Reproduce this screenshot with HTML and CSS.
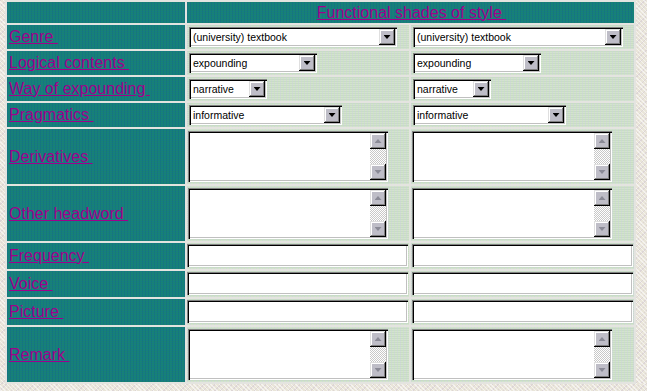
FILE: index.html
```html
<!DOCTYPE html>
<html lang="en">
<head>
  <meta charset="UTF-8" />
  <title>Functional shades of style</title>
  <link rel="stylesheet" href="styles.css">
</head>
<body>
  <table class="grid">
    <colgroup>
      <col class="c-lab"><col class="c-one"><col class="c-two">
    </colgroup>
    <tr>
      <td class="lab head"></td>
      <td class="lab head title" colspan="2"><a href="#">Functional shades of style&nbsp;</a></td>
    </tr>
    <tr>
      <td class="lab"><a href="#">Genre&nbsp;</a></td>
      <td class="val"><div class="drop w-genre"><select><option>(university) textbook</option></select><span class="arrow"></span></div></td>
      <td class="val"><div class="drop w-genre2"><select><option>(university) textbook</option></select><span class="arrow"></span></div></td>
    </tr>
    <tr>
      <td class="lab"><a href="#">Logical contents&nbsp;</a></td>
      <td class="val"><div class="drop w-logic"><select><option>expounding</option></select><span class="arrow"></span></div></td>
      <td class="val"><div class="drop w-logic"><select><option>expounding</option></select><span class="arrow"></span></div></td>
    </tr>
    <tr>
      <td class="lab"><a href="#">Way of expounding&nbsp;</a></td>
      <td class="val"><div class="drop w-way"><select><option>narrative</option></select><span class="arrow"></span></div></td>
      <td class="val"><div class="drop w-way"><select><option>narrative</option></select><span class="arrow"></span></div></td>
    </tr>
    <tr>
      <td class="lab"><a href="#">Pragmatics&nbsp;</a></td>
      <td class="val"><div class="drop w-prag"><select><option>informative</option></select><span class="arrow"></span></div></td>
      <td class="val"><div class="drop w-prag"><select><option>informative</option></select><span class="arrow"></span></div></td>
    </tr>
    <tr>
      <td class="lab"><a href="#">Derivatives&nbsp;</a></td>
      <td class="val"><div class="memo"><textarea></textarea><div class="sb"><span class="sb-btn up"></span><span class="sb-track"></span><span class="sb-btn down"></span></div></div></td>
      <td class="val"><div class="memo"><textarea></textarea><div class="sb"><span class="sb-btn up"></span><span class="sb-track"></span><span class="sb-btn down"></span></div></div></td>
    </tr>
    <tr>
      <td class="lab"><a href="#">Other headword&nbsp;</a></td>
      <td class="val"><div class="memo"><textarea></textarea><div class="sb"><span class="sb-btn up"></span><span class="sb-track"></span><span class="sb-btn down"></span></div></div></td>
      <td class="val"><div class="memo"><textarea></textarea><div class="sb"><span class="sb-btn up"></span><span class="sb-track"></span><span class="sb-btn down"></span></div></div></td>
    </tr>
    <tr>
      <td class="lab"><a href="#">Frequency&nbsp;</a></td>
      <td class="val"><input type="text" class="field"></td>
      <td class="val"><input type="text" class="field"></td>
    </tr>
    <tr>
      <td class="lab"><a href="#">Voice&nbsp;</a></td>
      <td class="val"><input type="text" class="field"></td>
      <td class="val"><input type="text" class="field"></td>
    </tr>
    <tr>
      <td class="lab"><a href="#">Picture&nbsp;</a></td>
      <td class="val"><input type="text" class="field"></td>
      <td class="val"><input type="text" class="field"></td>
    </tr>
    <tr>
      <td class="lab"><a href="#">Remark&nbsp;</a></td>
      <td class="val"><div class="memo"><textarea></textarea><div class="sb"><span class="sb-btn up"></span><span class="sb-track"></span><span class="sb-btn down"></span></div></div></td>
      <td class="val"><div class="memo"><textarea></textarea><div class="sb"><span class="sb-btn up"></span><span class="sb-track"></span><span class="sb-btn down"></span></div></div></td>
    </tr>
  </table>
</body>
</html>
```

FILE: styles.css
```css
* { box-sizing: border-box; }
body {
  margin: 0 0 0 5px;
  background-color: #e9e5d9;
  background-image:
    repeating-linear-gradient(45deg, rgba(255,255,255,0.55) 0 1px, transparent 1px 3px),
    repeating-linear-gradient(-45deg, rgba(190,175,205,0.3) 0 1px, transparent 1px 4px);
  font-family: "Liberation Sans", Arial, sans-serif;
  overflow: hidden;
}

.grid {
  table-layout: fixed;
  width: 631px;
  border-collapse: separate;
  border-spacing: 2px;
  background: #e4e4e0;
}
.c-lab { width: 178px; }
.c-one { width: 222px; }
.c-two { width: 223px; }
.grid td { padding: 0; border: none; }

.lab {
  background-color: #157f7e;
  background-image:
    repeating-linear-gradient(90deg, rgba(20,70,160,0.18) 0 1px, transparent 1px 3px),
    repeating-linear-gradient(0deg, rgba(40,140,70,0.18) 0 1px, transparent 1px 2px);
  padding-left: 2px !important;
  vertical-align: middle;
  font-size: 16px;
}
.lab a { color: #a0008c; text-decoration: underline; }
.head { height: 21px; }
.title { text-align: center; }

.val {
  background-color: #c8ddc4;
  background-image:
    repeating-linear-gradient(90deg, rgba(205,200,235,0.3) 0 1px, transparent 1px 3px),
    repeating-linear-gradient(0deg, rgba(255,255,240,0.2) 0 1px, transparent 1px 2px);
  vertical-align: middle;
}

/* sunken win95 box */
.drop, .memo, .field {
  background: #fff;
  box-shadow:
    inset 1px 1px 0 #808080,
    inset 2px 2px 0 #000,
    inset -1px -1px 0 #fff,
    inset -2px -2px 0 #c0c0c0;
}

.drop {
  display: flex;
  height: 20px;
  padding: 2px;
  margin: 2px 0 2px 2px;
}
.w-genre { width: 208px; }
.w-genre2 { width: 210px; }
.w-logic { width: 128px; }
.w-way { width: 78px; }
.w-prag { width: 153px; }
.drop select {
  appearance: none;
  -webkit-appearance: none;
  flex: 1;
  min-width: 0;
  height: 16px;
  border: none;
  background: transparent;
  padding: 0 2px;
  font-family: "Liberation Sans", Arial, sans-serif;
  font-size: 10.5px;
  color: #000;
  outline: none;
}

.arrow, .sb-btn {
  width: 16px;
  height: 16px;
  flex: none;
  background: #bebdc7;
  box-shadow:
    inset -1px -1px 0 #000,
    inset 1px 1px 0 #dfdfdf,
    inset -2px -2px 0 #808080,
    inset 2px 2px 0 #fff;
  display: flex;
  align-items: center;
  justify-content: center;
}
.arrow::after, .sb-btn::after {
  content: "";
  width: 7px;
  height: 4px;
  background: #000;
  clip-path: polygon(0 0, 100% 0, 50% 100%);
}
.sb-btn::after { background: #8a8a96; }
.sb-btn.up::after { clip-path: polygon(50% 0, 100% 100%, 0 100%); }

.memo {
  display: flex;
  width: 200px;
  height: 51px;
  padding: 2px;
  margin: 2px 0 2px 1px;
}
.memo textarea {
  flex: 1;
  min-width: 0;
  border: none;
  resize: none;
  overflow: hidden;
  outline: none;
  background: transparent;
  font-family: "Liberation Sans", Arial, sans-serif;
  font-size: 10.5px;
  padding: 1px 2px;
}
.sb {
  width: 16px;
  display: flex;
  flex-direction: column;
}
.sb-track {
  flex: 1;
  background: repeating-conic-gradient(#c8c8c8 0 25%, #fff 0 50%) 0 0 / 2px 2px;
}

.field {
  display: block;
  width: calc(100% - 1px);
  height: 23px;
  margin: 1px 0 2px 0;
  border: none;
  outline: none;
  padding: 2px 3px;
  font-family: "Liberation Sans", Arial, sans-serif;
  font-size: 10.5px;
}
.val:last-child .field { margin-left: 1px; width: calc(100% - 2px); }
```
